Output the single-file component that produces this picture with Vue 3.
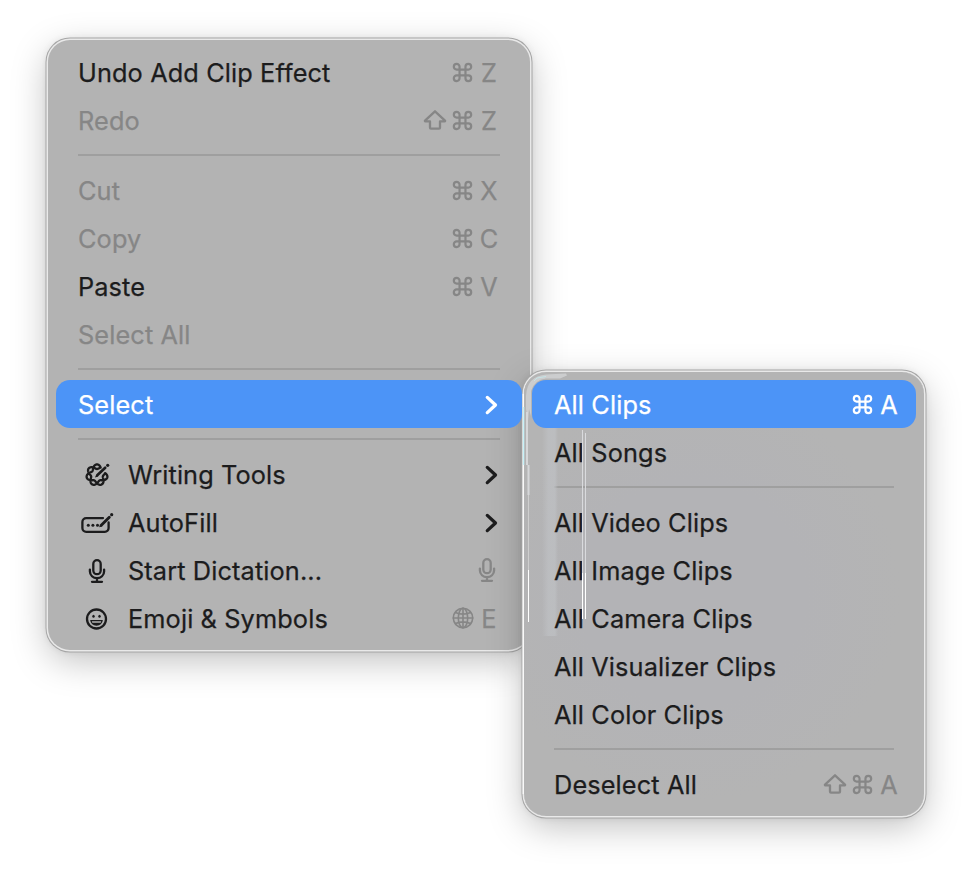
<script setup>
const mainMenu = [
  { label: 'Undo Add Clip Effect', keys: ['cmd'], letter: 'Z' },
  { label: 'Redo', keys: ['shift', 'cmd'], letter: 'Z', disabled: true },
  { separator: true },
  { label: 'Cut', keys: ['cmd'], letter: 'X', disabled: true },
  { label: 'Copy', keys: ['cmd'], letter: 'C', disabled: true },
  { label: 'Paste', keys: ['cmd'], letter: 'V' },
  { label: 'Select All', disabled: true },
  { separator: true },
  { label: 'Select', submenu: true, active: true },
  { separator: true },
  { label: 'Writing Tools', icon: 'writing', submenu: true },
  { label: 'AutoFill', icon: 'autofill', submenu: true },
  { label: 'Start Dictation...', icon: 'mic', keys: ['mic'] },
  { label: 'Emoji & Symbols', icon: 'emoji', keys: ['globe'], letter: 'E' }
]

const subMenu = [
  { label: 'All Clips', keys: ['cmd'], letter: 'A', active: true },
  { label: 'All Songs' },
  { separator: true },
  { label: 'All Video Clips' },
  { label: 'All Image Clips' },
  { label: 'All Camera Clips' },
  { label: 'All Visualizer Clips' },
  { label: 'All Color Clips' },
  { separator: true },
  { label: 'Deselect All', keys: ['shift', 'cmd'], letter: 'A' }
]

const menus = [
  { name: 'main', items: mainMenu },
  { name: 'sub', items: subMenu }
]

// two braided strands of the Writing Tools ring, open at the upper right
const strand = (sign) => {
  const points = []
  for (let deg = -13; deg <= 296; deg += 3) {
    const t = (deg * Math.PI) / 180
    const r = 8.3 + sign * 2.3 * Math.cos(3.5 * (t + Math.PI / 2))
    points.push(`${(16 + r * Math.cos(t)).toFixed(2)} ${(16 + r * Math.sin(t)).toFixed(2)}`)
  }
  return 'M' + points.join('L')
}
const ringPath = strand(1) + strand(-1)
</script>

<template>
  <div class="desktop">
    <svg class="defs" width="0" height="0">
      <symbol id="cmd" viewBox="0 0 22 22">
        <path d="M7.9 7.9V4.9a3 3 0 1 0-3 3h12.2a3 3 0 1 0-3-3v12.2a3 3 0 1 0 3-3H4.9a3 3 0 1 0 3 3z" />
      </symbol>
      <symbol id="shift" viewBox="0 0 24 22">
        <path d="M12 2.3L22 11.7a.4.4 0 0 1-.3.7H17v6.3a1 1 0 0 1-1 1H8a1 1 0 0 1-1-1v-6.3H2.3a.4.4 0 0 1-.3-.7z" />
      </symbol>
      <symbol id="mic" viewBox="0 0 20 26">
        <rect x="6.3" y="2.2" width="7.4" height="14" rx="3.7" />
        <path d="M2.9 11.6v2a7.1 6.6 0 0 0 14.2 0v-2M10 20.2v3.6M5 23.8h10" />
      </symbol>
      <symbol id="globe" viewBox="0 0 24 24">
        <g stroke-width="1.6">
          <circle cx="12" cy="12" r="9.7" />
          <ellipse cx="12" cy="12" rx="4.7" ry="9.7" />
          <path d="M12 2.3v19.4M2.3 12h19.4M4.4 6.4q7.6 3.4 15.2 0M4.4 17.6q7.6-3.4 15.2 0" />
        </g>
      </symbol>
      <symbol id="emoji" viewBox="0 0 32 32">
        <circle cx="15.5" cy="16" r="9.5" />
        <path class="solid" d="M9.2 17h12.6c-.4 3.5-2.9 5.7-6.3 5.7s-5.9-2.2-6.3-5.7z" />
        <path class="teeth" d="M10.8 18.3h9.4l-.5 1.4h-8.4z" />
        <ellipse class="solid" cx="12.5" cy="13.2" rx="1.2" ry="1.5" />
        <ellipse class="solid" cx="18.5" cy="13.2" rx="1.2" ry="1.5" />
      </symbol>
      <symbol id="autofill" viewBox="0 0 34 32">
        <path d="M23 11.1H6.2a3.8 3.8 0 0 0-3.8 3.8v6.2a3.8 3.8 0 0 0 3.8 3.8h18.6a3.8 3.8 0 0 0 3.8-3.8v-5.6" />
        <path d="M21.5 18l7.8-7.8" stroke-width="2.9" />
        <path class="solid" d="M19.2 20.2l.8-3.2 2.4 2.4z" />
        <circle class="solid" cx="31.7" cy="7.7" r="1.6" />
        <circle class="solid" cx="8.3" cy="18.2" r="1.5" />
        <circle class="solid" cx="12.9" cy="18.2" r="1.5" />
        <circle class="solid" cx="17.5" cy="18.2" r="1.5" />
      </symbol>
      <symbol id="writing" viewBox="0 0 32 32">
        <path :d="ringPath" stroke-width="2.3" />
        <path d="M16.5 16l7.7-7.2" stroke-width="2.7" />
        <path class="solid" d="M14 18.6l1.3-3.4 2.1 2.2z" />
        <circle class="solid" cx="26.7" cy="6.3" r="1.6" />
      </symbol>
      <symbol id="chevron" viewBox="0 0 14 20">
        <path d="M3.3 2.4l8.2 7.6-8.2 7.6" stroke-width="3.3" />
      </symbol>
    </svg>

    <div v-for="menu in menus" :key="menu.name" :class="['menu', menu.name]">
      <template v-for="(item, i) in menu.items" :key="i">
        <div v-if="item.separator" class="separator"></div>
        <div v-else :class="['item', { disabled: item.disabled, active: item.active }]">
          <span v-if="item.icon" class="icon">
            <svg :class="item.icon"><use :href="'#' + item.icon" /></svg>
          </span>
          <span class="label">{{ item.label }}</span>
          <svg v-if="item.submenu" class="chevron"><use href="#chevron" /></svg>
          <span v-if="item.keys" class="shortcut">
            <svg v-for="key in item.keys" :key="key" :class="key"><use :href="'#' + key" /></svg>
            <span v-if="item.letter" class="letter">{{ item.letter }}</span>
          </span>
        </div>
      </template>
      <!-- light refracted through the glass edge -->
      <svg v-if="menu.name === 'sub'" class="glass" width="80" height="280" viewBox="0 0 80 280">
        <defs>
          <linearGradient id="band">
            <stop offset="0" stop-color="#bfc1c4" stop-opacity="0" />
            <stop offset=".4" stop-color="#bfc1c4" stop-opacity=".7" />
            <stop offset=".8" stop-color="#bfc1c4" stop-opacity=".7" />
            <stop offset="1" stop-color="#bfc1c4" stop-opacity="0" />
          </linearGradient>
        </defs>
        <rect x="18" y="56" width="16" height="208" fill="url(#band)" />
        <path d="M2 37V24Q3 4 22 2.5L42 1.5l1 2-7 3H22Q10 8 7 19v25l-2-7-1 12z" fill="#d4d6d7" opacity=".75" />
        <path d="M10 9l3-3 9-1.5" stroke="#c4e4e6" />
        <path d="M-.7 22v400" stroke="#fafafa" stroke-width="1.3" />
        <path d="M-.4 35v58" stroke="#c6f1f8" stroke-width="1.3" />
        <path d="M3 40v53M4.5 93v30" stroke="#d6d7d9" stroke-width="2" />
        <path d="M4.5 123v75" stroke="#cfcfcf" />
        <path d="M4.5 198v52" stroke="#fff" />
      </svg>
      <svg v-if="menu.name === 'sub'" class="glass front" width="80" height="280" viewBox="0 0 80 280">
        <path d="M58.5 58v143M61.5 61v140" stroke="#d9dadd" />
        <path d="M58.5 201v46M61.5 201v46" stroke="#fff" />
      </svg>
    </div>
  </div>
</template>

<style>
body {
  margin: 0;
  background: #fff;
}
</style>

<style scoped>
.desktop {
  position: relative;
  width: 972px;
  height: 872px;
  overflow: hidden;
  background: #fff;
  font-family: Inter, "Liberation Sans", sans-serif;
  font-size: 25.3px;
  letter-spacing: 0.12px;
  -webkit-text-stroke: 0.25px currentColor;
  color: #1c1c1d;
}

.defs {
  position: absolute;
}

svg {
  fill: none;
  stroke: currentColor;
  stroke-width: 2.3;
  stroke-linecap: round;
  stroke-linejoin: round;
  flex: none;
}

.solid {
  fill: currentColor;
  stroke: none;
}

.teeth {
  fill: #b3b3b3;
  stroke: none;
}

.menu {
  position: absolute;
  box-sizing: border-box;
  padding: 8px;
  border-radius: 22px;
  background: #b3b3b3;
  box-shadow:
    0 0 0 1.5px #e9e9e9,
    0 0 0 2.5px #a6a6a6,
    0 10px 36px rgba(0, 0, 0, 0.26),
    0 0 8px rgba(0, 0, 0, 0.12);
}

.main {
  left: 48px;
  top: 40px;
  width: 482px;
}

.sub {
  left: 524px;
  top: 372px;
  width: 400px;
  background: radial-gradient(circle at 42% 50%, #b3b3b6 0, #b3b3b6 35%, #b4b4b4 65%);
}

.item {
  position: relative;
  z-index: 1;
  display: flex;
  align-items: center;
  box-sizing: border-box;
  height: 48px;
  padding: 0 22px;
  border-radius: 14px;
}

.sub .item {
  padding-right: 16px;
}

.label {
  flex: 1;
  padding-top: 1px;
  white-space: nowrap;
}

.disabled {
  color: #868686;
}

.active {
  background: #4c94f7;
  color: #fff;
}

.separator {
  height: 2px;
  margin: 10px 22px;
  background: #9f9f9f;
}

.icon {
  display: flex;
  align-items: center;
  justify-content: center;
  width: 32px;
  height: 32px;
  margin: 1px 15px 0 3px;
}

.icon .mic {
  margin: 0;
}

.writing,
.emoji {
  width: 32px;
  height: 32px;
}

.autofill {
  width: 34px;
  height: 32px;
}

.chevron {
  width: 14px;
  height: 20px;
  margin: 1px 2px 0 0;
}

.shortcut {
  display: flex;
  align-items: center;
  color: #868686;
}

.active .shortcut {
  color: #fff;
}

.letter {
  width: 22px;
  padding-top: 1px;
  text-align: center;
}

.cmd {
  width: 21px;
  height: 21px;
  margin: 0 5px 0 0;
}

.shift {
  width: 24px;
  height: 22px;
  margin: 0 5px 0 0;
}

.mic {
  width: 20px;
  height: 26px;
  margin-right: 3px;
}

.globe {
  width: 24px;
  height: 24px;
  margin: 0 3px 0 0;
}

.glass {
  position: absolute;
  left: 0;
  top: 0;
  overflow: visible;
  stroke: none;
  stroke-width: 1;
  stroke-linecap: butt;
}

.front {
  z-index: 2;
}
</style>
